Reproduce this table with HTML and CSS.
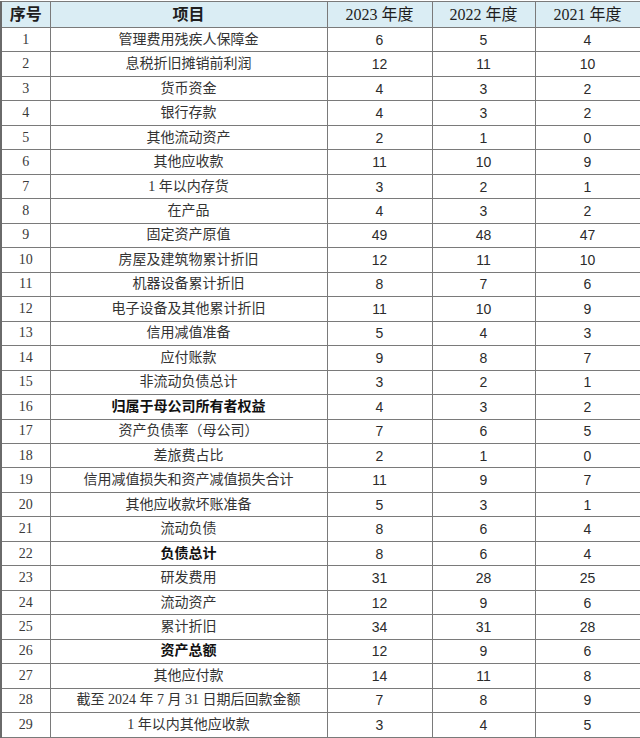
FILE: index.html
```html
<!DOCTYPE html>
<html>
<head>
<meta charset="utf-8">
<link rel="stylesheet" href="styles.css">
</head>
<body>
<table class="data">
<colgroup><col class="c1"><col class="c2"><col class="c3"><col class="c4"><col class="c5"></colgroup>
<thead>
<tr><th>序号</th><th>项目</th><th class="yr">2023 年度</th><th class="yr">2022 年度</th><th class="yr">2021 年度</th></tr>
</thead>
<tbody>
<tr><td class="no">1</td><td class="nm">管理费用残疾人保障金</td><td>6</td><td>5</td><td>4</td></tr>
<tr><td class="no">2</td><td class="nm">息税折旧摊销前利润</td><td>12</td><td>11</td><td>10</td></tr>
<tr><td class="no">3</td><td class="nm">货币资金</td><td>4</td><td>3</td><td>2</td></tr>
<tr><td class="no">4</td><td class="nm">银行存款</td><td>4</td><td>3</td><td>2</td></tr>
<tr><td class="no">5</td><td class="nm">其他流动资产</td><td>2</td><td>1</td><td>0</td></tr>
<tr><td class="no">6</td><td class="nm">其他应收款</td><td>11</td><td>10</td><td>9</td></tr>
<tr><td class="no">7</td><td class="nm">1 年以内存货</td><td>3</td><td>2</td><td>1</td></tr>
<tr><td class="no">8</td><td class="nm">在产品</td><td>4</td><td>3</td><td>2</td></tr>
<tr><td class="no">9</td><td class="nm">固定资产原值</td><td>49</td><td>48</td><td>47</td></tr>
<tr><td class="no">10</td><td class="nm">房屋及建筑物累计折旧</td><td>12</td><td>11</td><td>10</td></tr>
<tr><td class="no">11</td><td class="nm">机器设备累计折旧</td><td>8</td><td>7</td><td>6</td></tr>
<tr><td class="no">12</td><td class="nm">电子设备及其他累计折旧</td><td>11</td><td>10</td><td>9</td></tr>
<tr><td class="no">13</td><td class="nm">信用减值准备</td><td>5</td><td>4</td><td>3</td></tr>
<tr><td class="no">14</td><td class="nm">应付账款</td><td>9</td><td>8</td><td>7</td></tr>
<tr><td class="no">15</td><td class="nm">非流动负债总计</td><td>3</td><td>2</td><td>1</td></tr>
<tr><td class="no">16</td><td class="nm strong">归属于母公司所有者权益</td><td>4</td><td>3</td><td>2</td></tr>
<tr><td class="no">17</td><td class="nm">资产负债率（母公司）</td><td>7</td><td>6</td><td>5</td></tr>
<tr><td class="no">18</td><td class="nm">差旅费占比</td><td>2</td><td>1</td><td>0</td></tr>
<tr><td class="no">19</td><td class="nm">信用减值损失和资产减值损失合计</td><td>11</td><td>9</td><td>7</td></tr>
<tr><td class="no">20</td><td class="nm">其他应收款坏账准备</td><td>5</td><td>3</td><td>1</td></tr>
<tr><td class="no">21</td><td class="nm">流动负债</td><td>8</td><td>6</td><td>4</td></tr>
<tr><td class="no">22</td><td class="nm strong">负债总计</td><td>8</td><td>6</td><td>4</td></tr>
<tr><td class="no">23</td><td class="nm">研发费用</td><td>31</td><td>28</td><td>25</td></tr>
<tr><td class="no">24</td><td class="nm">流动资产</td><td>12</td><td>9</td><td>6</td></tr>
<tr><td class="no">25</td><td class="nm">累计折旧</td><td>34</td><td>31</td><td>28</td></tr>
<tr><td class="no">26</td><td class="nm strong">资产总额</td><td>12</td><td>9</td><td>6</td></tr>
<tr><td class="no">27</td><td class="nm">其他应付款</td><td>14</td><td>11</td><td>8</td></tr>
<tr><td class="no">28</td><td class="nm">截至 2024 年 7 月 31 日期后回款金额</td><td>7</td><td>8</td><td>9</td></tr>
<tr><td class="no">29</td><td class="nm">1 年以内其他应收款</td><td>3</td><td>4</td><td>5</td></tr>
</tbody>
</table>
</body>
</html>
```
FILE: styles.css
```css
html, body {
  margin: 0;
  padding: 0;
  background: #ffffff;
}
body {
  padding-top: 1px;
}
.data {
  border-collapse: collapse;
  table-layout: fixed;
  width: 639px;
  color: #2b2b2b;
  font-family: "Liberation Sans", Arial, sans-serif;
  font-size: 14px;
}
.c1 { width: 49px; }
.c2 { width: 277px; }
.c3 { width: 105px; }
.c4 { width: 103px; }
.c5 { width: 105px; }
.data th, .data td {
  border: 1px solid #7a7a7a;
  padding: 0;
  text-align: center;
  vertical-align: middle;
  line-height: 16px;
}
.data thead th {
  background: #daedf4;
  height: 25px;
  font-family: "Liberation Serif", "Noto Sans CJK SC", serif;
  font-size: 16px;
  font-weight: bold;
  color: #1e1e1e;
}
.data thead th.yr {
  font-weight: normal;
  font-size: 16px;
}
.data tbody td {
  height: 23.48px;
}
.data td.no {
  font-family: "Liberation Serif", serif;
  font-size: 14px;
  color: #3a3a3a;
}
.data td.nm {
  font-family: "Liberation Serif", "Noto Sans CJK SC", serif;
  font-size: 14px;
  color: #333333;
}
.data td.strong {
  font-weight: bold;
  color: #111111;
}
.data tr > :first-child {
  border-left: 2px solid #6a6a6a;
}
```
